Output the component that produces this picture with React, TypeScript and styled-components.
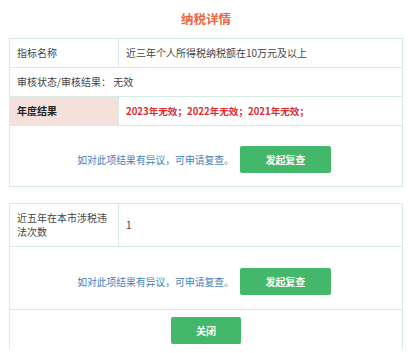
import React from "react";
import styled, { createGlobalStyle } from "styled-components";

const Global = createGlobalStyle`
  html, body { margin: 0; padding: 0; background: #fff; }
  body { font-family: "Noto Sans CJK SC", "Noto Sans", sans-serif; color: #444; }
`;

const Page = styled.div`
  padding: 0 10px 0 9px;
`;

const Title = styled.h1`
  margin: 0;
  height: 38px;
  line-height: 38px;
  text-align: center;
  font-size: 12.5px;
  font-weight: 700;
  color: #ea6640;
`;

const Card = styled.div<{ $open?: boolean }>`
  border: 1px solid #d6ebe3;
  border-bottom: ${(p) => (p.$open ? "none" : "1px solid #d6ebe3")};
  & + & { margin-top: 16px; }
`;

const Row = styled.div<{ $span?: boolean }>`
  display: grid;
  grid-template-columns: ${(p) => (p.$span ? "1fr" : "109px 1fr")};
  border-bottom: 1px solid #d6ebe3;
  &:last-child { border-bottom: none; }
`;

const Cell = styled.div<{ $label?: boolean; $head?: boolean; $red?: boolean }>`
  padding: 7px 7px 7px;
  font-size: ${(p) => (p.$red ? "9.6px" : "10px")};
  line-height: 14px;
  display: flex;
  align-items: center;
  background: ${(p) => (p.$head ? "#f4e1dc" : "transparent")};
  border-right: ${(p) => (p.$label ? "1px solid #d6ebe3" : "none")};
  font-weight: ${(p) => (p.$head || p.$red ? 700 : 400)};
  color: ${(p) => (p.$red ? "#dd2a2f" : p.$head ? "#222" : "#444")};
`;

const ActionRow = styled.div<{ $top: number; $bottom: number }>`
  display: flex;
  justify-content: center;
  align-items: center;
  gap: 6px;
  padding: ${(p) => `${p.$top}px 0 ${p.$bottom}px`};
  border-bottom: 1px solid #d6ebe3;
  &:last-child { border-bottom: none; }
`;

const Hint = styled.span`
  font-size: 9.8px;
  color: #3d7fc1;
  margin-left: -4px;
`;

const GreenButton = styled.button<{ $w: number }>`
  width: ${(p) => p.$w}px;
  height: 27px;
  border: none;
  border-radius: 2px;
  background: #43b86b;
  color: #fff;
  font-family: "Noto Sans CJK SC", "Noto Sans", sans-serif;
  font-size: 10px;
  font-weight: 700;
  padding: 0;
  cursor: pointer;
`;

export default function App() {
  return (
    <>
      <Global />
      <Page>
        <Title>纳税详情</Title>
        <Card>
          <Row>
            <Cell $label>指标名称</Cell>
            <Cell>近三年个人所得税纳税额在10万元及以上</Cell>
          </Row>
          <Row $span>
            <Cell>审核状态/审核结果：&nbsp;无效</Cell>
          </Row>
          <Row>
            <Cell $label $head>年度结果</Cell>
            <Cell $red>2023年无效；2022年无效；2021年无效；</Cell>
          </Row>
          <ActionRow $top={20} $bottom={13}>
            <Hint>如对此项结果有异议，可申请复查。</Hint>
            <GreenButton $w={91}>发起复查</GreenButton>
          </ActionRow>
        </Card>
        <Card $open>
          <Row>
            <Cell $label>近五年在本市涉税违法次数</Cell>
            <Cell>1</Cell>
          </Row>
          <ActionRow $top={21} $bottom={14}>
            <Hint>如对此项结果有异议，可申请复查。</Hint>
            <GreenButton $w={91}>发起复查</GreenButton>
          </ActionRow>
          <ActionRow $top={7} $bottom={5}>
            <GreenButton $w={70}>关闭</GreenButton>
          </ActionRow>
        </Card>
      </Page>
    </>
  );
}
